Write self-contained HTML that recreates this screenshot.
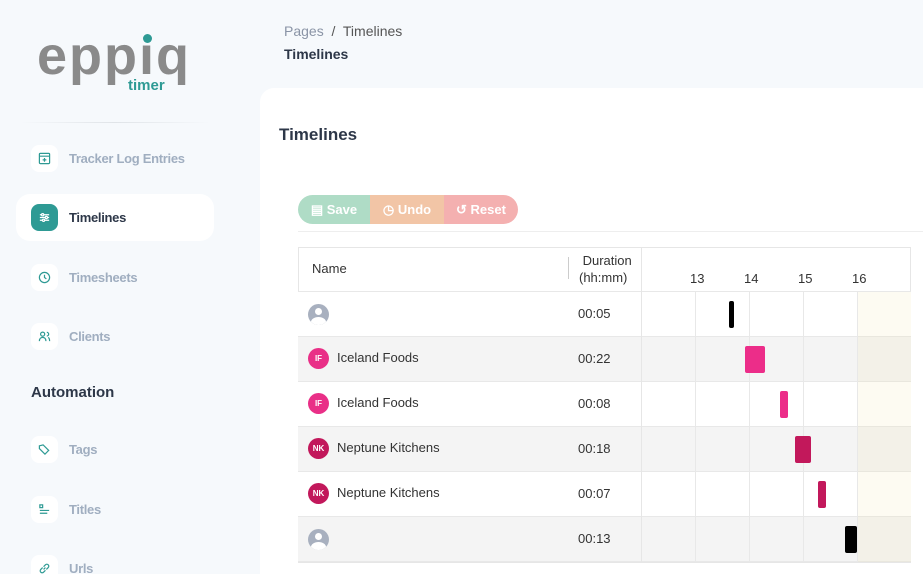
<!DOCTYPE html>
<html><head><style>
*{margin:0;padding:0;box-sizing:border-box}
html,body{width:923px;height:574px;overflow:hidden}
body{background:#f6f9fc;font-family:"Liberation Sans",sans-serif;position:relative}
.abs{position:absolute}
.nav{position:absolute;left:31px;width:27px;height:27px;background:#fff;border-radius:8px;display:flex;align-items:center;justify-content:center}
.lbl{position:absolute;left:69px;font-size:13px;font-weight:bold;color:#a0aec0;letter-spacing:-0.3px}
.row{position:absolute;left:298px;width:613px;height:45px;border-bottom:1px solid #e8e8e8}
.cell{position:absolute;font-size:13px;color:#333}
.av{position:absolute;left:10px;top:13px;width:21px;height:21px;border-radius:50%;color:#fff;font-size:8px;font-weight:bold;display:flex;align-items:center;justify-content:center}
.bar{position:absolute;border-radius:2px}
</style></head><body>
<!-- logo -->
<div class="abs" style="left:37px;top:29px;font-size:54px;line-height:54px;color:#8a8a8a;font-weight:bold;letter-spacing:2px">eppıq</div>
<div class="abs" style="left:143px;top:34px;width:9px;height:9px;border-radius:50%;background:#2e9a94"></div>
<div class="abs" style="left:127px;top:77px;font-size:15px;font-weight:bold;color:#2e9a94;background:#f6f9fc;padding:0 1px">timer</div>
<div class="abs" style="left:20px;top:122px;width:190px;height:1px;background:linear-gradient(90deg,transparent,#e0e4e8,transparent)"></div>

<div class="nav" style="top:145px"><svg width="13" height="13" viewBox="0 0 14 14" fill="none" stroke="#2e9a94" stroke-width="1.3"><rect x="1.5" y="1.5" width="11" height="11" rx="1"/><path d="M1.5 4.5h11M7 6.5v4M5 8.5h4"/></svg></div>
<div class="lbl" style="top:151px">Tracker Log Entries</div>
<div class="abs" style="left:16px;top:194px;width:198px;height:47px;background:#fff;border-radius:14px"></div>
<div class="nav" style="top:204px;background:#2e9a94"><svg width="13" height="13" viewBox="0 0 14 14" fill="none" stroke="#fff" stroke-width="1.3"><path d="M2 4h10M2 7h10M2 10h10"/><circle cx="5" cy="4" r="1.2" fill="#2e9a94"/><circle cx="9" cy="7" r="1.2" fill="#2e9a94"/><circle cx="6" cy="10" r="1.2" fill="#2e9a94"/></svg></div>
<div class="lbl" style="top:210px;color:#2d3748">Timelines</div>
<div class="nav" style="top:264px"><svg width="13" height="13" viewBox="0 0 14 14" fill="none" stroke="#2e9a94" stroke-width="1.3"><circle cx="7" cy="7" r="5.5"/><path d="M7 4v3l2 1.5"/></svg></div>
<div class="lbl" style="top:270px">Timesheets</div>
<div class="nav" style="top:323px"><svg width="13" height="13" viewBox="0 0 14 14" fill="none" stroke="#2e9a94" stroke-width="1.3"><circle cx="5" cy="4.5" r="2.2"/><path d="M1.5 12c0-3 1.5-4 3.5-4s3.5 1 3.5 4M9.5 2.5a2 2 0 010 4M11 8c1 .5 1.5 2 1.5 4"/></svg></div>
<div class="lbl" style="top:329px">Clients</div>
<div class="abs" style="left:31px;top:384px;font-size:15px;font-weight:bold;color:#2d3748">Automation</div>
<div class="nav" style="top:436px"><svg width="13" height="13" viewBox="0 0 14 14" fill="none" stroke="#2e9a94" stroke-width="1.3"><path d="M1.5 3l4-1 6 6-4 4-6-6z"/></svg></div>
<div class="lbl" style="top:442px">Tags</div>
<div class="nav" style="top:496px"><svg width="13" height="13" viewBox="0 0 14 14" fill="none" stroke="#2e9a94" stroke-width="1.3"><rect x="2" y="2" width="3" height="3"/><path d="M2 8h10M2 11h8"/></svg></div>
<div class="lbl" style="top:502px">Titles</div>
<div class="nav" style="top:555px"><svg width="13" height="13" viewBox="0 0 14 14" fill="none" stroke="#2e9a94" stroke-width="1.3"><path d="M6 8l2-2M5 6L3 8a2 2 0 003 3l2-2M9 8l2-2a2 2 0 00-3-3L6 5"/></svg></div>
<div class="lbl" style="top:561px">Urls</div>

<!-- header -->
<div class="abs" style="left:284px;top:23px;font-size:14px;color:#8a94a6">Pages <span style="color:#555">&nbsp;/&nbsp; Timelines</span></div>
<div class="abs" style="left:284px;top:46px;font-size:14px;font-weight:bold;color:#2d3748">Timelines</div>

<!-- card -->
<div class="abs" style="left:260px;top:88px;width:663px;height:486px;background:#fff;border-top-left-radius:14px"></div>
<div class="abs" style="left:279px;top:125px;font-size:17px;font-weight:bold;color:#2d3748">Timelines</div>

<div class="abs" style="left:298px;top:195px;height:29px;width:220px;border-radius:15px;overflow:hidden;display:flex;font-size:13px;font-weight:bold;color:#fff">
<div style="width:72px;background:#afdcc6;display:flex;align-items:center;justify-content:center">▤&nbsp;Save</div>
<div style="width:74px;background:#f2c5a6;display:flex;align-items:center;justify-content:center">◷&nbsp;Undo</div>
<div style="width:74px;background:#f4b0b0;display:flex;align-items:center;justify-content:center">↺&nbsp;Reset</div>
</div>
<div class="abs" style="left:298px;top:231px;width:625px;height:1px;background:#eee"></div>

<!-- table -->
<div class="abs" style="left:298px;top:247px;width:613px;height:316px;border:1px solid #e6e6e6"></div>
<div class="row" style="top:247px;height:45px;border-top:1px solid #e6e6e6;border-left:1px solid #e6e6e6"></div>
<div class="cell" style="left:312px;top:261px">Name</div>
<div class="abs" style="left:568px;top:257px;width:1px;height:22px;background:#ccc"></div>
<div class="cell" style="left:579px;top:252px;line-height:17px">&nbsp;Duration<br>(hh:mm)</div>
<div class="cell" style="left:690px;top:271px">13</div>
<div class="cell" style="left:744px;top:271px">14</div>
<div class="cell" style="left:798px;top:271px">15</div>
<div class="cell" style="left:852px;top:271px">16</div>

<div class="row" style="top:292px;background:#fff"></div>
<div class="row" style="top:337px;background:#f4f4f4"></div>
<div class="row" style="top:382px;background:#fff"></div>
<div class="row" style="top:427px;background:#f4f4f4"></div>
<div class="row" style="top:472px;background:#fff"></div>
<div class="row" style="top:517px;background:#f4f4f4"></div>
<div class="abs" style="left:857px;top:292px;width:54px;height:270px;background:rgba(240,225,170,0.15)"></div>
<div class="abs" style="left:641px;top:247px;width:1px;height:316px;background:#e6e6e6"></div>
<div class="abs" style="left:695px;top:292px;width:1px;height:270px;background:#e8e8e8"></div>
<div class="abs" style="left:749px;top:292px;width:1px;height:270px;background:#e8e8e8"></div>
<div class="abs" style="left:803px;top:292px;width:1px;height:270px;background:#e8e8e8"></div>
<div class="abs" style="left:857px;top:292px;width:1px;height:270px;background:#e8e8e8"></div>

<div class="abs" style="left:308px;top:304px;width:21px;height:21px;border-radius:50%;background:#a8b0bf;overflow:hidden"><div style="position:absolute;left:7px;top:4px;width:7px;height:7px;border-radius:50%;background:#fff"></div><div style="position:absolute;left:3px;top:13px;width:15px;height:10px;border-radius:50%;background:#fff"></div></div>
<div class="cell" style="left:578px;top:306px">00:05</div>
<div class="av" style="left:308px;top:348px;background:#e92f87">IF</div>
<div class="cell" style="left:337px;top:350px">Iceland Foods</div><div class="cell" style="left:578px;top:351px">00:22</div>
<div class="av" style="left:308px;top:393px;background:#e92f87">IF</div>
<div class="cell" style="left:337px;top:395px">Iceland Foods</div><div class="cell" style="left:578px;top:396px">00:08</div>
<div class="av" style="left:308px;top:438px;background:#c2185b">NK</div>
<div class="cell" style="left:337px;top:440px">Neptune Kitchens</div><div class="cell" style="left:578px;top:441px">00:18</div>
<div class="av" style="left:308px;top:483px;background:#c2185b">NK</div>
<div class="cell" style="left:337px;top:485px">Neptune Kitchens</div><div class="cell" style="left:578px;top:486px">00:07</div>
<div class="abs" style="left:308px;top:529px;width:21px;height:21px;border-radius:50%;background:#a8b0bf;overflow:hidden"><div style="position:absolute;left:7px;top:4px;width:7px;height:7px;border-radius:50%;background:#fff"></div><div style="position:absolute;left:3px;top:13px;width:15px;height:10px;border-radius:50%;background:#fff"></div></div>
<div class="cell" style="left:578px;top:531px">00:13</div>

<div class="bar" style="left:729px;top:301px;width:5px;height:27px;background:#000"></div>
<div class="bar" style="left:745px;top:346px;width:20px;height:27px;background:#ec2d89"></div>
<div class="bar" style="left:780px;top:391px;width:8px;height:27px;background:#ec2d89"></div>
<div class="bar" style="left:795px;top:436px;width:16px;height:27px;background:#c2185b"></div>
<div class="bar" style="left:818px;top:481px;width:8px;height:27px;background:#c2185b"></div>
<div class="bar" style="left:845px;top:526px;width:12px;height:27px;background:#000"></div>
</body></html>
